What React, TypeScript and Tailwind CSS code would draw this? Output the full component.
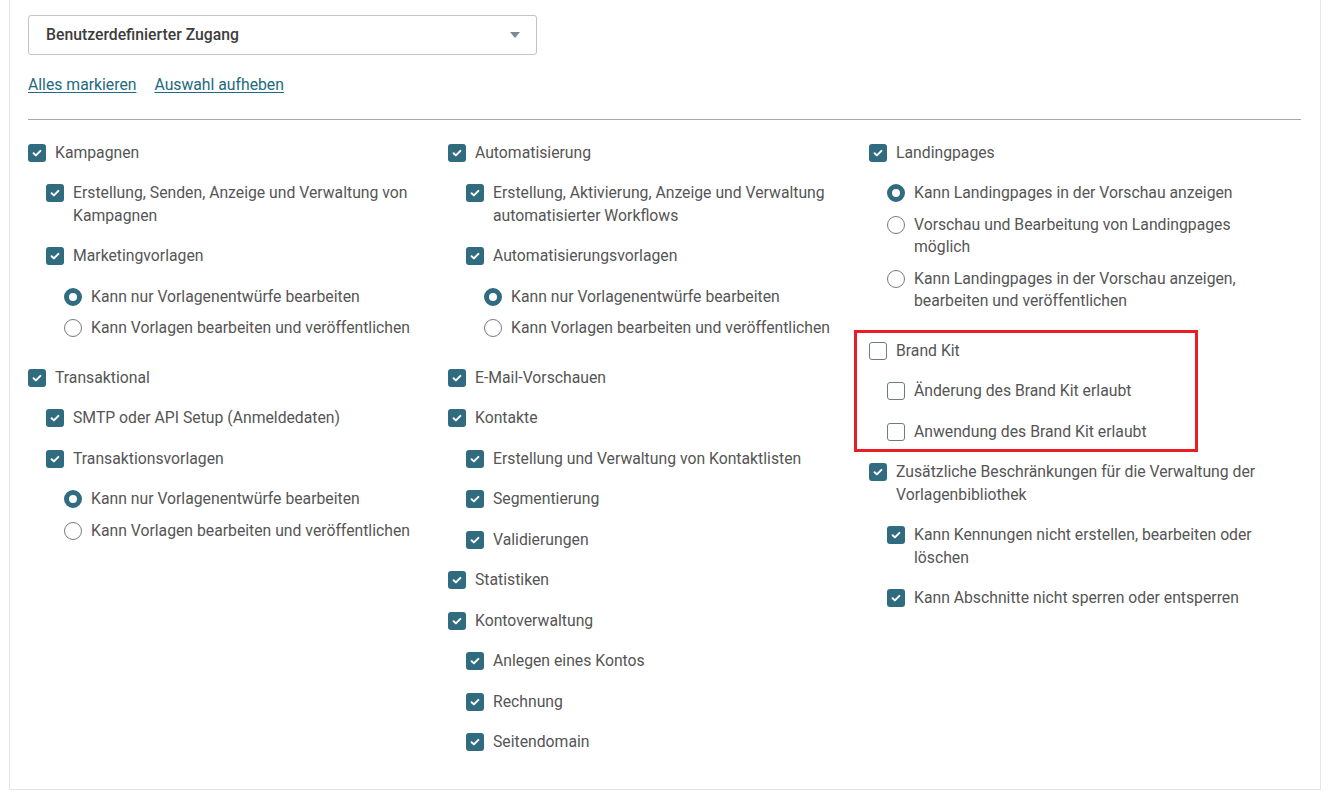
import React from "react"

type Radios = { options: string[]; selected: number }

type Perm = {
  label: string
  checked: boolean
  children?: Perm[]
  radios?: Radios
  highlight?: boolean
}

const col1: Perm[] = [
  {
    label: "Kampagnen",
    checked: true,
    children: [
      { label: "Erstellung, Senden, Anzeige und Verwaltung von Kampagnen", checked: true },
      {
        label: "Marketingvorlagen",
        checked: true,
        radios: {
          options: ["Kann nur Vorlagenentwürfe bearbeiten", "Kann Vorlagen bearbeiten und veröffentlichen"],
          selected: 0,
        },
      },
    ],
  },
  {
    label: "Transaktional",
    checked: true,
    children: [
      { label: "SMTP oder API Setup (Anmeldedaten)", checked: true },
      {
        label: "Transaktionsvorlagen",
        checked: true,
        radios: {
          options: ["Kann nur Vorlagenentwürfe bearbeiten", "Kann Vorlagen bearbeiten und veröffentlichen"],
          selected: 0,
        },
      },
    ],
  },
]

const col2: Perm[] = [
  {
    label: "Automatisierung",
    checked: true,
    children: [
      { label: "Erstellung, Aktivierung, Anzeige und Verwaltung automatisierter Workflows", checked: true },
      {
        label: "Automatisierungsvorlagen",
        checked: true,
        radios: {
          options: ["Kann nur Vorlagenentwürfe bearbeiten", "Kann Vorlagen bearbeiten und veröffentlichen"],
          selected: 0,
        },
      },
    ],
  },
  { label: "E-Mail-Vorschauen", checked: true },
  {
    label: "Kontakte",
    checked: true,
    children: [
      { label: "Erstellung und Verwaltung von Kontaktlisten", checked: true },
      { label: "Segmentierung", checked: true },
      { label: "Validierungen", checked: true },
    ],
  },
  { label: "Statistiken", checked: true },
  {
    label: "Kontoverwaltung",
    checked: true,
    children: [
      { label: "Anlegen eines Kontos", checked: true },
      { label: "Rechnung", checked: true },
      { label: "Seitendomain", checked: true },
    ],
  },
]

const col3: Perm[] = [
  {
    label: "Landingpages",
    checked: true,
    radios: {
      options: [
        "Kann Landingpages in der Vorschau anzeigen",
        "Vorschau und Bearbeitung von Landingpages möglich",
        "Kann Landingpages in der Vorschau anzeigen, bearbeiten und veröffentlichen",
      ],
      selected: 0,
    },
  },
  {
    label: "Brand Kit",
    checked: false,
    highlight: true,
    children: [
      { label: "Änderung des Brand Kit erlaubt", checked: false },
      { label: "Anwendung des Brand Kit erlaubt", checked: false },
    ],
  },
  {
    label: "Zusätzliche Beschränkungen für die Verwaltung der Vorlagenbibliothek",
    checked: true,
    children: [
      { label: "Kann Kennungen nicht erstellen, bearbeiten oder löschen", checked: true },
      { label: "Kann Abschnitte nicht sperren oder entsperren", checked: true },
    ],
  },
]

const Checkbox = ({ checked }: { checked: boolean }) =>
  checked ? (
    <span className="mt-[2.25px] flex size-[18px] shrink-0 items-center justify-center rounded-[3px] bg-[#306b7f]">
      <svg viewBox="0 0 18 18" className="size-[18px]">
        <path d="M5.6 9.2 L7.9 11.4 L12.4 6.9" fill="none" stroke="#fff" strokeWidth="2" strokeLinecap="round" strokeLinejoin="round" />
      </svg>
    </span>
  ) : (
    <span className="mt-[2.25px] block size-[18px] shrink-0 rounded-[3px] border border-[#6f7b84] bg-white" />
  )

const Radio = ({ checked }: { checked: boolean }) => (
  <span
    className={
      checked
        ? "mt-[2.25px] block size-[18px] shrink-0 rounded-full border-[5px] border-[#306b7f] bg-white"
        : "mt-[2.25px] block size-[18px] shrink-0 rounded-full border border-[#7a7a7a] bg-white"
    }
  />
)

const PermItem = ({ perm }: { perm: Perm }) => {
  const body = (
    <div className="flex flex-col gap-[18px]">
      <label className="flex items-start gap-[9px]">
        <Checkbox checked={perm.checked} />
        <span>{perm.label}</span>
      </label>
      {perm.children && (
        <div className="flex flex-col gap-[18px] pl-[18px]">
          {perm.children.map((c) => (
            <PermItem key={c.label} perm={c} />
          ))}
        </div>
      )}
      {perm.radios && (
        <div className="flex flex-col gap-[9px] pb-[9px] pl-[18px]">
          {perm.radios.options.map((opt, i) => (
            <label key={opt} className="flex items-start gap-[9px]">
              <Radio checked={i === perm.radios!.selected} />
              <span>{opt}</span>
            </label>
          ))}
        </div>
      )}
    </div>
  )

  if (!perm.highlight) return body

  // red annotation frame drawn over the Brand Kit group
  return (
    <div className="relative">
      {body}
      <div className="pointer-events-none absolute -top-[10px] -bottom-[9px] -left-[15px] w-[344px] border-[3px] border-[#ec1c24]" />
    </div>
  )
}

const Column = ({ items }: { items: Perm[] }) => (
  <div className="flex flex-col gap-[18px] pr-5">
    {items.map((p) => (
      <PermItem key={p.label} perm={p} />
    ))}
  </div>
)

export default function App() {
  return (
    <div className="min-h-[799px] bg-white font-['Roboto',sans-serif] text-[15.75px] leading-[22.5px] text-[#555]">
      <div className="ml-[9px] w-[1312px] border-x border-b border-[#e6e6e6] pt-[15px] pr-[19px] pb-[35px] pl-[18px]">
        <div className="flex h-10 w-[509px] items-center justify-between rounded-[3px] border border-[#c4c4c4] pr-4 pl-[17px]">
          <span className="font-medium text-[#3d3d3d]">Benutzerdefinierter Zugang</span>
          <svg viewBox="0 0 10 6" className="h-[6px] w-[10px]">
            <path d="M0 0 H10 L5 6 Z" fill="#7d8a93" />
          </svg>
        </div>

        <div className="mt-[19px] flex gap-[18px]">
          <a href="#" className="text-[#1e6a80] underline underline-offset-2">Alles markieren</a>
          <a href="#" className="text-[#1e6a80] underline underline-offset-2">Auswahl aufheben</a>
        </div>

        <hr className="mt-[22px] border-t border-[#a8a8a8]" />

        <div className="mt-[22px] grid grid-cols-[420px_421px_1fr]">
          <Column items={col1} />
          <Column items={col2} />
          <Column items={col3} />
        </div>
      </div>
    </div>
  )
}
